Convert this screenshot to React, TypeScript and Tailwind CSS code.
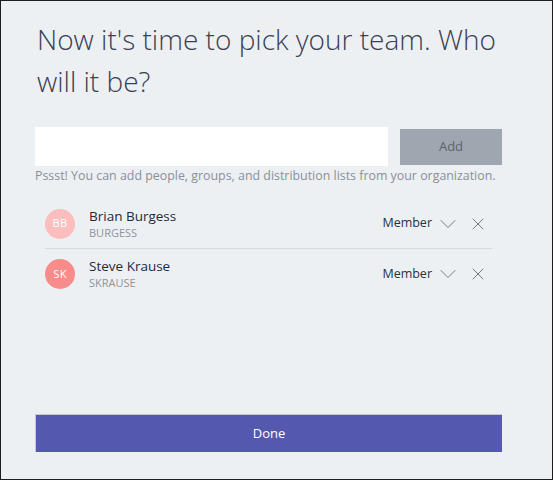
import { ChevronDown, X } from "lucide-react";

const people = [
  { initials: "BB", name: "Brian Burgess", alias: "BURGESS", color: "bg-[#fcbdbd]" },
  { initials: "SK", name: "Steve Krause", alias: "SKRAUSE", color: "bg-[#f98b8b]" },
];

export default function App() {
  return (
    <div
      className="w-[553px] h-[480px] border border-[#1c1c1c] bg-[#edf0f3] pl-[34px] pr-[50px] flex flex-col"
      style={{ fontFamily: '"Open Sans", "Noto Sans", sans-serif' }}
    >
      <h1 className="mt-[17px] text-[28px] leading-[42px] font-light text-[#3a4154] pl-[2px] -mr-[6px]">
        Now it's time to pick your team. Who will it be?
      </h1>

      <div className="mt-[25px] flex items-start gap-[12px]">
        <div className="w-[353px] h-[39px] bg-white" />
        <button className="mt-[2px] w-[102px] h-[36px] bg-[#a0a6af] text-[13px] text-[#5c6372]">
          Add
        </button>
      </div>
      <p className="mt-[1px] text-[12.4px] leading-[18px] text-[#8a8f9b] whitespace-nowrap">
        Pssst! You can add people, groups, and distribution lists from your organization.
      </p>

      <div className="mt-[14px] mx-[10px]">
        {people.map((p, i) => (
          <div
            key={p.alias}
            className={`h-[50px] flex items-center ${i === 0 ? "border-b border-[#d6d9de]" : ""}`}
          >
            <div
              className={`w-[30px] h-[30px] rounded-full ${p.color} text-white text-[11px] flex items-center justify-center tracking-wide`}
            >
              {p.initials}
            </div>
            <div className="ml-[14px] flex-1 flex flex-col">
              <span className="text-[13.5px] leading-[17px] text-[#252a3a]">{p.name}</span>
              <span className="text-[11px] leading-[15px] text-[#8e93a0]">{p.alias}</span>
            </div>
            <span className="text-[12.5px] text-[#2b3040]">Member</span>
            <ChevronDown className="ml-[2px] w-[28px] h-[28px] text-[#6b7080]" strokeWidth={0.8} />
            <X className="ml-[6px] mr-[4px] w-[20px] h-[20px] text-[#5b6070]" strokeWidth={1} />
          </div>
        ))}
      </div>

      <div className="flex-1" />
      <button className="mb-[27px] h-[38px] w-full bg-[#5558af] border-t border-l border-[#c5c7cd] text-white text-[13px]">
        Done
      </button>
    </div>
  );
}
